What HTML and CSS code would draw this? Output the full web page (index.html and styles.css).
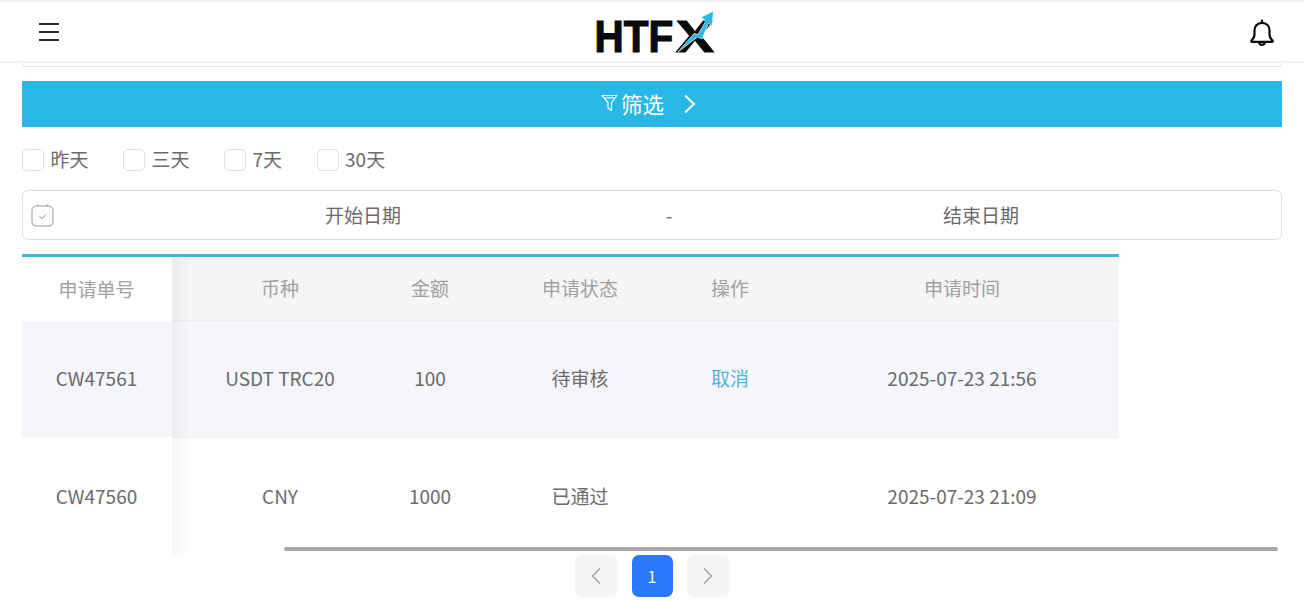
FILE: index.html
```html
<!DOCTYPE html>
<html lang="zh-CN">
<head>
<meta charset="utf-8">
<title>HTFX</title>
<link rel="stylesheet" href="styles.css">
</head>
<body>
<header class="topbar">
  <svg class="menu-icon" width="20" height="18" viewBox="0 0 20 18" aria-hidden="true"><path d="M0 1h20M0 9h20M0 17h20" stroke="#2b2b2b" stroke-width="2" fill="none"/></svg>
  <svg class="logo" width="120" height="44" viewBox="0 0 120 44" role="img" aria-label="HTFX">
    <text class="logo-text" transform="translate(-2.500 41) scale(.92 1)">HTF</text>
    <text class="logo-text" transform="translate(79 41) scale(1.290 1)">X</text>
    <path d="M81 41L97 22.500L101 23.500L108.500 10.500L104.500 6L116.500 0L115 15.500L111.500 12L105 28L100.500 26Z" fill="#29b8e5" stroke="#fff" stroke-width="0.700"/>
  </svg>
  <svg class="bell" width="26" height="28" viewBox="0 0 26 28" aria-hidden="true"><path d="M2.500 21.500c2.500-2 3-3.500 3-6.500v-3.500C5.500 7 8.500 3.800 13 3.800s7.500 3.200 7.500 7.700V15c0 3 .5 4.500 3 6.500.5.500.2 1.300-.5 1.300H3c-.7 0-1-.8-.5-1.300ZM13 1.500v2.300M10 23c.3 1.800 1.400 2.800 3 2.800s2.700-1 3-2.800" fill="none" stroke="#0b0b0b" stroke-width="2.200" stroke-linecap="round" stroke-linejoin="round"/></svg>
</header>
<main class="page">
  <div class="clipped-box"></div>
  <div class="filter-bar">
    <svg class="filter-icon" width="17" height="18" viewBox="0 0 17 18" aria-hidden="true"><path d="M1 1.500h15L10.500 8.500V16.500L7 14V8.500ZM4 3.800h9" fill="none" stroke="#fff" stroke-width="1.200" stroke-linejoin="round"/></svg>
    <span class="filter-label">筛选</span>
    <svg class="filter-arrow" width="13" height="20" viewBox="0 0 13 20" aria-hidden="true"><path d="M2 1.500L11 10L2 18.500" fill="none" stroke="#fff" stroke-width="2"/></svg>
  </div>
  <div class="quick-dates">
    <label class="check"><span class="check-box"></span>昨天</label>
    <label class="check"><span class="check-box"></span>三天</label>
    <label class="check"><span class="check-box"></span>7天</label>
    <label class="check"><span class="check-box"></span>30天</label>
  </div>
  <div class="date-range">
    <svg class="cal-icon" width="23" height="24" viewBox="0 0 23 24" aria-hidden="true"><rect x="1" y="3" width="21" height="20" rx="4.500" fill="none" stroke="#b9bcc4" stroke-width="1.500"/><path d="M6.500 1v3M16.500 1v3" stroke="#b9bcc4" stroke-width="1.500"/><path d="M8 13l3 2.500 4-4" fill="none" stroke="#b9bcc4" stroke-width="1.200"/></svg>
    <span class="date-field">开始日期</span>
    <span class="date-sep">-</span>
    <span class="date-field">结束日期</span>
  </div>
  <section class="table">
    <div class="fixed-col">
      <div class="cell head-fixed">申请单号</div>
      <div class="cell row-a">CW47561</div>
      <div class="cell row-b">CW47560</div>
    </div>
    <div class="scroll-col">
      <div class="grid-row head-row">
        <div class="cell">币种</div><div class="cell">金额</div><div class="cell">申请状态</div><div class="cell">操作</div><div class="cell">申请时间</div>
      </div>
      <div class="grid-row row-a">
        <div class="cell">USDT TRC20</div><div class="cell">100</div><div class="cell">待审核</div><div class="cell link">取消</div><div class="cell">2025-07-23 21:56</div>
      </div>
      <div class="grid-row row-b">
        <div class="cell">CNY</div><div class="cell">1000</div><div class="cell">已通过</div><div class="cell"></div><div class="cell">2025-07-23 21:09</div>
      </div>
    </div>
    <div class="scroll-thumb"></div>
  </section>
  <nav class="pager">
    <span class="pg pg-nav"><svg width="12" height="18" viewBox="0 0 12 18" aria-hidden="true"><path d="M10 1.500L2.500 9L10 16.500" fill="none" stroke="#a8a8a8" stroke-width="1.600"/></svg></span>
    <span class="pg pg-on">1</span>
    <span class="pg pg-nav"><svg width="12" height="18" viewBox="0 0 12 18" aria-hidden="true"><path d="M2 1.500L9.500 9L2 16.500" fill="none" stroke="#a8a8a8" stroke-width="1.600"/></svg></span>
  </nav>
</main>
</body>
</html>
```
FILE: styles.css
```css
* { box-sizing: border-box; }
html, body { margin: 0; height: 600px; overflow: hidden; background: #fff; }
body { font-family: "Noto Sans CJK SC", "Noto Sans", sans-serif; font-size: 19px; color: #6a6a6a; }

.topbar {
  height: 63px;
  border-top: 2px solid #eee;
  border-bottom: 2px solid #f1f1f1;
  display: flex;
  align-items: center;
  justify-content: space-between;
  padding: 0 29px 0 39px;
  position: relative;
}
.menu-icon { display: block; }
.logo { position: absolute; left: 597px; top: 9px; display: block; overflow: visible; }
.logo-text { font-family: "Liberation Sans", sans-serif; font-weight: 700; font-size: 44px; fill: #0a0a0a; stroke: #0a0a0a; stroke-width: 1.200px; }
.bell { display: block; margin-top: 2px; }

.page { padding: 0 22px; }
.clipped-box { height: 4px; border: 1px solid #e4e4e4; border-top: 0; margin-bottom: 14px; }

.filter-bar {
  height: 46px;
  background: #29b8e5;
  color: #fff;
  display: flex;
  align-items: center;
  justify-content: center;
  padding-right: 7px;
}
.filter-icon { margin-right: 3px; margin-top: -2px; }
.filter-label { font-size: 21.500px; line-height: 1; }
.filter-arrow { margin-left: 19px; }

.quick-dates { display: flex; gap: 34.500px; margin-top: 20px; height: 24px; align-items: center; }
.check { display: flex; align-items: center; gap: 6.500px; line-height: 24px; }
.check-box { width: 22px; height: 22px; margin-top: 2px; border: 1px solid #dcdfe6; border-radius: 5px; background: #fff; }

.date-range {
  display: flex;
  align-items: center;
  height: 50px;
  margin-top: 19px;
  border: 1px solid #dedede;
  border-radius: 6px;
  padding-left: 8px;
}
.cal-icon { width: 23px; margin-right: 9px; flex: none; }
.date-field { width: 600px; text-align: center; padding-bottom: 2px; }
.date-sep { width: 18px; text-align: center; padding-right: 6px; padding-bottom: 2px; }

.table { position: relative; display: flex; width: 1097px; height: 301px; margin-top: 14px; border-top: 3px solid #3cb8d9; overflow: visible; }
.fixed-col { width: 150px; flex: none; position: relative; }
.fixed-col::after { content: ""; position: absolute; top: 0; bottom: 0; left: 100%; width: 20px; background: linear-gradient(to right, rgba(0,0,0,.035), rgba(0,0,0,0)); }
.scroll-col { flex: 1; }
.grid-row { display: grid; grid-template-columns: 183px 150px 150px 150px 314px; text-align: center; }
.cell { display: flex; align-items: center; justify-content: center; height: 100%; }
.grid-row .cell:first-child { margin-left: 33px; }
.fixed-col .cell { padding-right: 1px; }
.head-fixed { height: 64px; color: #a0a0a0; background: #fff; padding-bottom: 2px; }
.head-row { height: 64px; color: #a0a0a0; background: #f5f5f5; border-bottom: 1px solid #eeeeee; }
.head-row .cell { padding-bottom: 2px; }
.row-a { height: 117px; background: #f5f6fa; }
.row-a .cell { padding-bottom: 4px; }
.fixed-col .row-a { height: 116px; padding-bottom: 3px; }
.grid-row.row-a { border-bottom: 1px solid #eeeeee; }
.row-b { height: 117px; background: #fff; }
.row-b .cell { padding-bottom: 2px; }
.fixed-col .row-b { height: 118px; padding-bottom: 1px; }
.link { color: #4ab6dc; }

.scroll-thumb { position: absolute; left: 262px; width: 994px; top: 290px; height: 4px; background: #a8a8a8; border-radius: 2px; }

.pager { display: flex; justify-content: center; gap: 14px; height: 42px; }
.pg { display: flex; align-items: center; justify-content: center; border-radius: 7px; height: 42px; font-size: 16px; }
.pg-nav { width: 43px; background: #f5f5f5; }
.pg-on { width: 41px; background: #2979ff; color: #fff; }
```
